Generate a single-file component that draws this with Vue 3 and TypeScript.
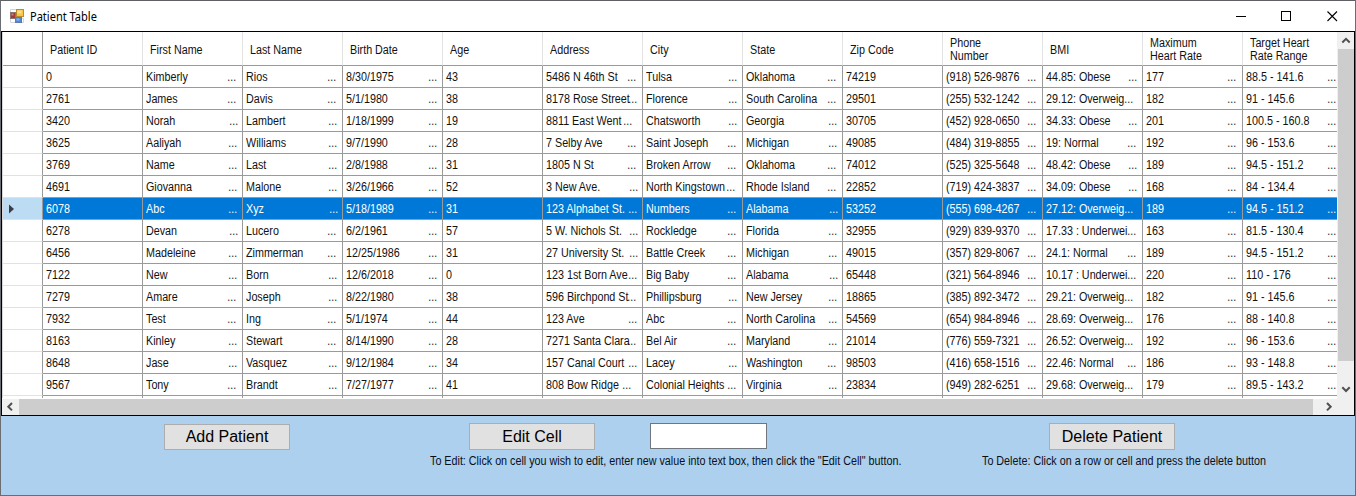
<script setup lang="ts">
interface Column { title: string[] }
type Cell = [text: string, dots?: number]

const columns: Column[] = [
  { title: ['Patient ID'] },
  { title: ['First Name'] },
  { title: ['Last Name'] },
  { title: ['Birth Date'] },
  { title: ['Age'] },
  { title: ['Address'] },
  { title: ['City'] },
  { title: ['State'] },
  { title: ['Zip Code'] },
  { title: ['Phone', 'Number'] },
  { title: ['BMI'] },
  { title: ['Maximum', 'Heart Rate'] },
  { title: ['Target Heart', 'Rate Range'] },
]

// Each padded value carries the offset at which its overflow dots begin.
const rows: Cell[][] = [
  [['0'], ['Kimberly', 86], ['Rios', 86], ['8/30/1975', 87], ['43'], ['5486 N 46th St', 86], ['Tulsa', 87], ['Oklahoma', 86], ['74219'], ['(918) 526-9876', 86], ['44.85: Obese', 87], ['177', 86], ['88.5 - 141.6', 86]],
  [['2761'], ['James', 86], ['Davis', 86], ['5/1/1980', 87], ['38'], ['8178 Rose Street', 87], ['Florence', 87], ['South Carolina', 86], ['29501'], ['(255) 532-1242', 86], ['29.12: Overweig', 83], ['182', 86], ['91 - 145.6', 86]],
  [['3420'], ['Norah', 88], ['Lambert', 87], ['1/18/1999', 87], ['19'], ['8811 East Went', 82], ['Chatsworth', 87], ['Georgia', 87], ['30705'], ['(452) 928-0650', 86], ['34.33: Obese', 87], ['201', 86], ['100.5 - 160.8', 86]],
  [['3625'], ['Aaliyah', 87], ['Williams', 87], ['9/7/1990', 87], ['28'], ['7 Selby Ave', 86], ['Saint Joseph', 86], ['Michigan', 87], ['49085'], ['(484) 319-8855', 86], ['19: Normal', 86], ['192', 86], ['96 - 153.6', 86]],
  [['3769'], ['Name', 87], ['Last', 87], ['2/8/1988', 87], ['31'], ['1805 N St', 86], ['Broken Arrow', 86], ['Oklahoma', 86], ['74012'], ['(525) 325-5648', 86], ['48.42: Obese', 87], ['189', 86], ['94.5 - 151.2', 86]],
  [['4691'], ['Giovanna', 87], ['Malone', 87], ['3/26/1966', 87], ['52'], ['3 New Ave.', 88], ['North Kingstown', 85], ['Rhode Island', 86], ['22852'], ['(719) 424-3837', 86], ['34.09: Obese', 87], ['168', 86], ['84 - 134.4', 86]],
  [['6078'], ['Abc', 87], ['Xyz', 88], ['5/18/1989', 87], ['31'], ['123 Alphabet St.', 87], ['Numbers', 86], ['Alabama', 88], ['53252'], ['(555) 698-4267', 86], ['27.12: Overweig', 83], ['189', 86], ['94.5 - 151.2', 86]],
  [['6278'], ['Devan', 88], ['Lucero', 86], ['6/2/1961', 87], ['57'], ['5 W. Nichols St.', 88], ['Rockledge', 86], ['Florida', 87], ['32955'], ['(929) 839-9370', 86], ['17.33 : Underwei', 86], ['163', 86], ['81.5 - 130.4', 86]],
  [['6456'], ['Madeleine', 87], ['Zimmerman', 86], ['12/25/1986', 87], ['31'], ['27 University St.', 88], ['Battle Creek', 86], ['Michigan', 87], ['49015'], ['(357) 829-8067', 86], ['24.1: Normal', 86], ['189', 86], ['94.5 - 151.2', 86]],
  [['7122'], ['New', 87], ['Born', 87], ['12/6/2018', 87], ['0'], ['123 1st Born Ave', 87], ['Big Baby', 86], ['Alabama', 88], ['65448'], ['(321) 564-8946', 86], ['10.17 : Underwei', 86], ['220', 86], ['110 - 176', 86]],
  [['7279'], ['Amare', 86], ['Joseph', 87], ['8/22/1980', 87], ['38'], ['596 Birchpond St', 86], ['Phillipsburg', 87], ['New Jersey', 87], ['18865'], ['(385) 892-3472', 86], ['29.21: Overweig', 83], ['182', 86], ['91 - 145.6', 86]],
  [['7932'], ['Test', 86], ['Ing', 86], ['5/1/1974', 87], ['44'], ['123 Ave', 87], ['Abc', 86], ['North Carolina', 87], ['54569'], ['(654) 984-8946', 86], ['28.69: Overweig', 83], ['176', 86], ['88 - 140.8', 86]],
  [['8163'], ['Kinley', 87], ['Stewart', 86], ['8/14/1990', 87], ['28'], ['7271 Santa Clara', 86], ['Bel Air', 86], ['Maryland', 87], ['21014'], ['(776) 559-7321', 86], ['26.52: Overweig', 83], ['192', 86], ['96 - 153.6', 86]],
  [['8648'], ['Jase', 87], ['Vasquez', 87], ['9/12/1984', 87], ['34'], ['157 Canal Court', 87], ['Lacey', 87], ['Washington', 86], ['98503'], ['(416) 658-1516', 86], ['22.46: Normal', 86], ['186', 86], ['93 - 148.8', 86]],
  [['9567'], ['Tony', 86], ['Brandt', 87], ['7/27/1977', 87], ['41'], ['808 Bow Ridge', 81], ['Colonial Heights', 86], ['Virginia', 87], ['23834'], ['(949) 282-6251', 86], ['29.68: Overweig', 83], ['179', 86], ['89.5 - 143.2', 86]],
]
const selected = 6
</script>

<template>
  <div class="window">
    <header class="titlebar">
      <svg class="app-icon" width="14" height="14" viewBox="0 0 14 14">
        <rect x="0.5" y="3.5" width="5" height="6" fill="#a33a35" stroke="#8d7672" />
        <rect x="1.5" y="4.5" width="2" height="2" fill="#d98078" />
        <rect x="6.5" y="0.5" width="7" height="7" fill="#f5c742" stroke="#b98d2c" />
        <rect x="7.5" y="1.5" width="4" height="3" fill="#fbe08a" />
        <rect x="5.5" y="8.5" width="6" height="5" fill="#5287d2" stroke="#5c7cae" />
        <rect x="6.5" y="9.5" width="3" height="2" fill="#8fb6ea" />
        <path d="M0.5 10V13.5H5M12 9.5H13.5V13.5H12M0.5 3V0.5H6" fill="none" stroke="#d3d6dc" />
      </svg>
      <span class="title">Patient Table</span>
      <svg class="controls" width="120" height="12" viewBox="0 0 120 12" fill="none" stroke="#000" shape-rendering="crispEdges">
        <path d="M1 6.5H11" />
        <rect x="46.5" y="1.5" width="9" height="9" />
        <path d="M92.5 1.5L102 11M102 1.5L92.5 11" shape-rendering="auto" stroke-width="1.1" />
      </svg>
    </header>

    <section class="grid-box">
      <div class="grid-main">
        <div class="viewport">
          <div class="row head">
            <div class="stub"></div>
            <div v-for="(c, i) in columns" :key="i" class="cell">
              <div class="label" :class="{ single: c.title.length === 1 }">
                <span v-for="l in c.title" :key="l" class="sq">{{ l }}</span>
              </div>
            </div>
          </div>
          <div v-for="(r, i) in rows" :key="i" class="row" :class="{ on: i === selected }">
            <div class="stub">
              <svg v-if="i === selected" width="5" height="10" viewBox="0 0 5 10"><path d="M0 0.5L5 5L0 9.5Z" fill="#3c3c44" /></svg>
            </div>
            <div v-for="(c, j) in r" :key="j" class="cell">
              <span class="value" :style="{ width: (c[1] ?? 96) - 5 + 'px' }"><span class="sq">{{ c[0] }}</span></span>
              <span v-if="c[1]" class="dots">...</span>
            </div>
          </div>
          <div class="row">
            <div class="stub"></div>
            <div v-for="n in columns.length" :key="n" class="cell"></div>
          </div>
        </div>
        <div class="vbar">
          <svg class="arrow" width="16" height="17" viewBox="0 0 16 17"><path d="M4.3 10.5L8 6.8L11.7 10.5" /></svg>
          <div class="vthumb"></div>
          <svg class="arrow end" width="16" height="17" viewBox="0 0 16 17"><path d="M4.3 6.3L8 10L11.7 6.3" /></svg>
        </div>
      </div>
      <div class="hbar">
        <svg class="arrow" width="17" height="16" viewBox="0 0 17 16"><path d="M10 4L6.3 7.7L10 11.4" /></svg>
        <div class="hthumb"></div>
        <svg class="arrow right" width="25" height="16" viewBox="0 0 25 16"><path d="M14 4L17.7 7.7L14 11.4" /></svg>
      </div>
    </section>

    <footer class="panel">
      <div class="group add"><button class="btn">Add Patient</button></div>
      <div class="group edit">
        <div class="line"><button class="btn">Edit Cell</button><input class="field" type="text" /></div>
        <p class="hint"><span class="sq">To Edit: Click on cell you wish to edit, enter new value into text box, then click the "Edit Cell" button.</span></p>
      </div>
      <div class="group delete">
        <button class="btn">Delete Patient</button>
        <p class="hint"><span class="sq">To Delete: Click on a row or cell and press the delete button</span></p>
      </div>
    </footer>
  </div>
</template>

<style scoped>
.window {
  box-sizing: border-box;
  width: 1356px;
  height: 496px;
  border: 1px solid #6a6e74;
  border-top-color: #5f6063;
  background: #fff;
  display: flex;
  flex-direction: column;
  overflow: hidden;
  font-family: "Liberation Sans", Arial, sans-serif;
  font-size: 12px;
  color: #111;
}
.titlebar {
  height: 30px;
  flex: none;
  display: flex;
  align-items: center;
  padding-left: 9px;
}
.app-icon { margin-right: 6px; }
.title {
  font-family: "Noto Sans", sans-serif;
  font-size: 12px;
  flex: 1;
  color: #000;
  transform: scaleX(0.92);
  transform-origin: 0 50%;
}
.controls { flex: none; }
.sq {
  display: block;
  width: max-content;
  transform: scaleX(0.896);
  transform-origin: 0 50%;
  white-space: pre;
}
.grid-box {
  box-sizing: border-box;
  height: 385px;
  flex: none;
  border: 1px solid #000;
  display: flex;
  flex-direction: column;
}
.grid-main {
  display: flex;
  height: 367px;
}
.viewport {
  width: 1335px;
  height: 366px;
  overflow: hidden;
  border-left: 1px solid #d8d8d8;
  box-sizing: border-box;
}
.row {
  display: flex;
  width: 1340px;
  height: 22px;
}
.stub {
  box-sizing: border-box;
  width: 40px;
  flex: none;
  border-right: 1px solid #9a9a9a;
  border-bottom: 1px solid #e2e2e2;
  display: flex;
  align-items: center;
  padding-left: 6px;
}
.cell {
  box-sizing: border-box;
  width: 100px;
  flex: none;
  border-right: 1px solid #9a9a9a;
  border-bottom: 1px solid #9a9a9a;
  display: flex;
  align-items: center;
  padding-left: 3px;
  white-space: nowrap;
}
.value { flex: none; }
.dots { letter-spacing: -0.33px; opacity: 0.85; }
.head { height: 34px; }
.head .stub { border-bottom-color: #9a9a9a; }
.head .cell {
  border-right-color: #e2e2e2;
  padding-left: 7px;
}
.head .label { line-height: 13px; padding-top: 2px; }
.head .label.single { padding-top: 4px; }
.on .cell { background: #0078d7; color: #fff; }
.on .stub { background: #bcdcf4; }
.arrow { flex: none; display: block; background: #f0f0f0; }
.arrow path { fill: none; stroke: #505050; stroke-width: 2; }
.vbar {
  width: 17px;
  display: flex;
  flex-direction: column;
  background: #f0f0f0;
  padding-left: 1px;
  box-sizing: border-box;
}
.vthumb { height: 312px; background: #cdcdcd; }
.end { margin-top: 20px; }
.hbar { height: 16px; display: flex; background: #f0f0f0; }
.hthumb { width: 1294px; background: #cdcdcd; }
.panel {
  flex: 1;
  background: #add0ee;
  display: flex;
  color: #0a0f18;
}
.group { flex: none; padding-top: 7px; }
.add { width: 266px; padding-left: 163px; padding-top: 8px; }
.edit { width: 552px; }
.delete { width: 372px; }
.line { display: flex; padding-left: 39px; }
.delete .btn { margin-left: 67px; }
.btn {
  box-sizing: border-box;
  display: block;
  width: 126px;
  height: 27px;
  padding: 0;
  border: 1px solid #adadad;
  background: #e1e1e1;
  color: #000;
  font: 16px "Liberation Sans", Arial, sans-serif;
}
.add .btn { height: 26px; }
.field {
  box-sizing: border-box;
  width: 117px;
  height: 26px;
  margin-left: 55px;
  border: 1px solid #70767e;
  background: #fff;
  padding: 0 4px;
  outline: none;
}
.hint { margin: 4px 0 0; line-height: 15px; }
</style>

<style>
body { margin: 0; background: #fff; }
</style>
